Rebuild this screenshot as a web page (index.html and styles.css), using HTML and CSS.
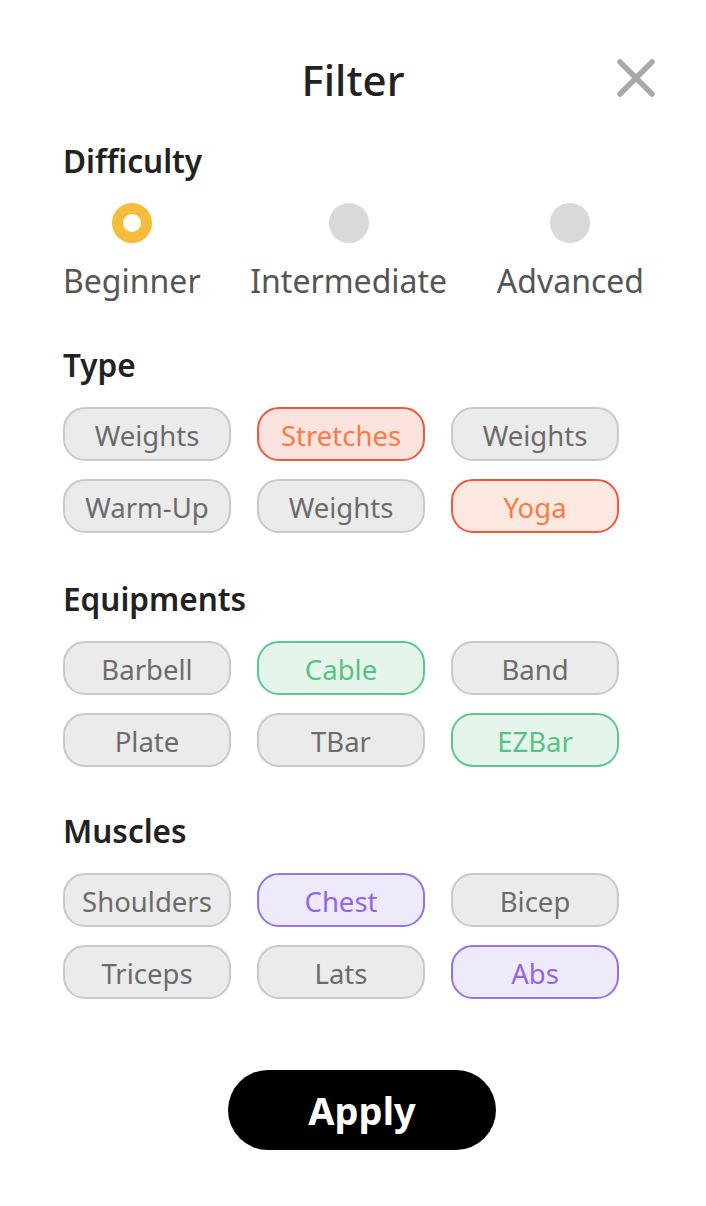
FILE: index.html
```html
<!DOCTYPE html>
<html lang="en">
<head>
<meta charset="utf-8">
<title>Filter</title>
<link rel="stylesheet" href="styles.css">
</head>
<body>
<div class="sheet">
  <header class="header">
    <span></span>
    <h1 class="title">Filter</h1>
    <button class="close" aria-label="Close">
      <svg width="38" height="38" viewBox="0 0 38 38"><path d="M3 3 L35 35 M35 3 L3 35" stroke="#a8a8a8" stroke-width="5.5" stroke-linecap="round" fill="none"/></svg>
    </button>
  </header>

  <section class="section">
    <h2 class="heading">Difficulty</h2>
    <div class="levels">
      <div class="level"><span class="radio radio-on"></span><span class="level-label">Beginner</span></div>
      <div class="level"><span class="radio"></span><span class="level-label">Intermediate</span></div>
      <div class="level"><span class="radio"></span><span class="level-label">Advanced</span></div>
    </div>
  </section>

  <section class="section sec-type">
    <h2 class="heading">Type</h2>
    <div class="chips">
      <span class="chip">Weights</span>
      <span class="chip chip-red">Stretches</span>
      <span class="chip">Weights</span>
      <span class="chip">Warm-Up</span>
      <span class="chip">Weights</span>
      <span class="chip chip-red chip-peach">Yoga</span>
    </div>
  </section>

  <section class="section sec-equip">
    <h2 class="heading">Equipments</h2>
    <div class="chips">
      <span class="chip">Barbell</span>
      <span class="chip chip-green">Cable</span>
      <span class="chip">Band</span>
      <span class="chip">Plate</span>
      <span class="chip">TBar</span>
      <span class="chip chip-green">EZBar</span>
    </div>
  </section>

  <section class="section sec-muscle">
    <h2 class="heading">Muscles</h2>
    <div class="chips">
      <span class="chip">Shoulders</span>
      <span class="chip chip-purple">Chest</span>
      <span class="chip">Bicep</span>
      <span class="chip">Triceps</span>
      <span class="chip">Lats</span>
      <span class="chip chip-purple">Abs</span>
    </div>
  </section>

  <div class="actions">
    <button class="apply">Apply</button>
  </div>
</div>
</body>
</html>
```

FILE: styles.css
```css
* { box-sizing: border-box; }
html, body {
  margin: 0;
  padding: 0;
  background: #ffffff;
}
body {
  font-family: "Noto Sans", "Open Sans", sans-serif;
  color: #222222;
}
.sheet {
  width: 706px;
  padding: 50px 0 0 63px;
}
.header {
  display: grid;
  grid-template-columns: 1fr auto 1fr;
  align-items: center;
  height: 60px;
  margin-left: -63px;
}
.title {
  margin: 0;
  font-size: 42px;
  font-weight: 500;
  line-height: 60px;
  color: #222222;
}
.close {
  justify-self: end;
  margin-right: 51px;
  margin-top: -4px;
  padding: 0;
  border: 0;
  background: none;
  width: 38px;
  height: 38px;
  display: flex;
}
.section { margin-top: 33px; }
.heading {
  margin: 0;
  font-size: 31.5px;
  font-weight: 600;
  line-height: 36px;
  color: #222222;
}
.levels {
  width: 581px;
  display: flex;
  justify-content: space-between;
  margin-top: 24px;
}
.level {
  display: flex;
  flex-direction: column;
  align-items: center;
}
.radio {
  width: 40px;
  height: 40px;
  border-radius: 50%;
  background: #d9d9d9;
}
.radio-on {
  background: #ffffff;
  border: 11px solid #f6bd3b;
}
.level-label {
  margin-top: 18px;
  font-size: 32px;
  line-height: 40px;
  color: #555555;
}
.sec-type { margin-top: 46px; }
.sec-equip { margin-top: 48px; }
.sec-muscle { margin-top: 46px; }
.chips {
  margin-top: 24px;
  display: grid;
  grid-template-columns: repeat(3, 168px);
  column-gap: 26px;
  row-gap: 18px;
}
.chip {
  height: 54px;
  padding-top: 2px;
  border: 2px solid #c9c9c9;
  border-radius: 22px;
  background: #ebebeb;
  color: #6b6b6b;
  font-size: 27.5px;
  line-height: 50px;
  text-align: center;
}
.chip-red {
  background: #fde3de;
  border-color: #f2563c;
  color: #ff7a45;
}
.chip-peach { background: #fde9e0; }
.chip-green {
  background: #e6f5eb;
  border-color: #5bc98b;
  color: #54c384;
}
.chip-purple {
  background: #eee9fb;
  border-color: #9472e8;
  color: #9267e6;
}
.actions {
  margin-top: 71px;
  margin-left: -63px;
  display: flex;
  justify-content: center;
  padding-left: 18px;
}
.apply {
  width: 268px;
  height: 80px;
  border: 0;
  border-radius: 40px;
  background: #000000;
  color: #ffffff;
  font-family: "Noto Sans", "Open Sans", sans-serif;
  font-size: 38px;
  font-weight: 700;
  padding: 0;
}
```
